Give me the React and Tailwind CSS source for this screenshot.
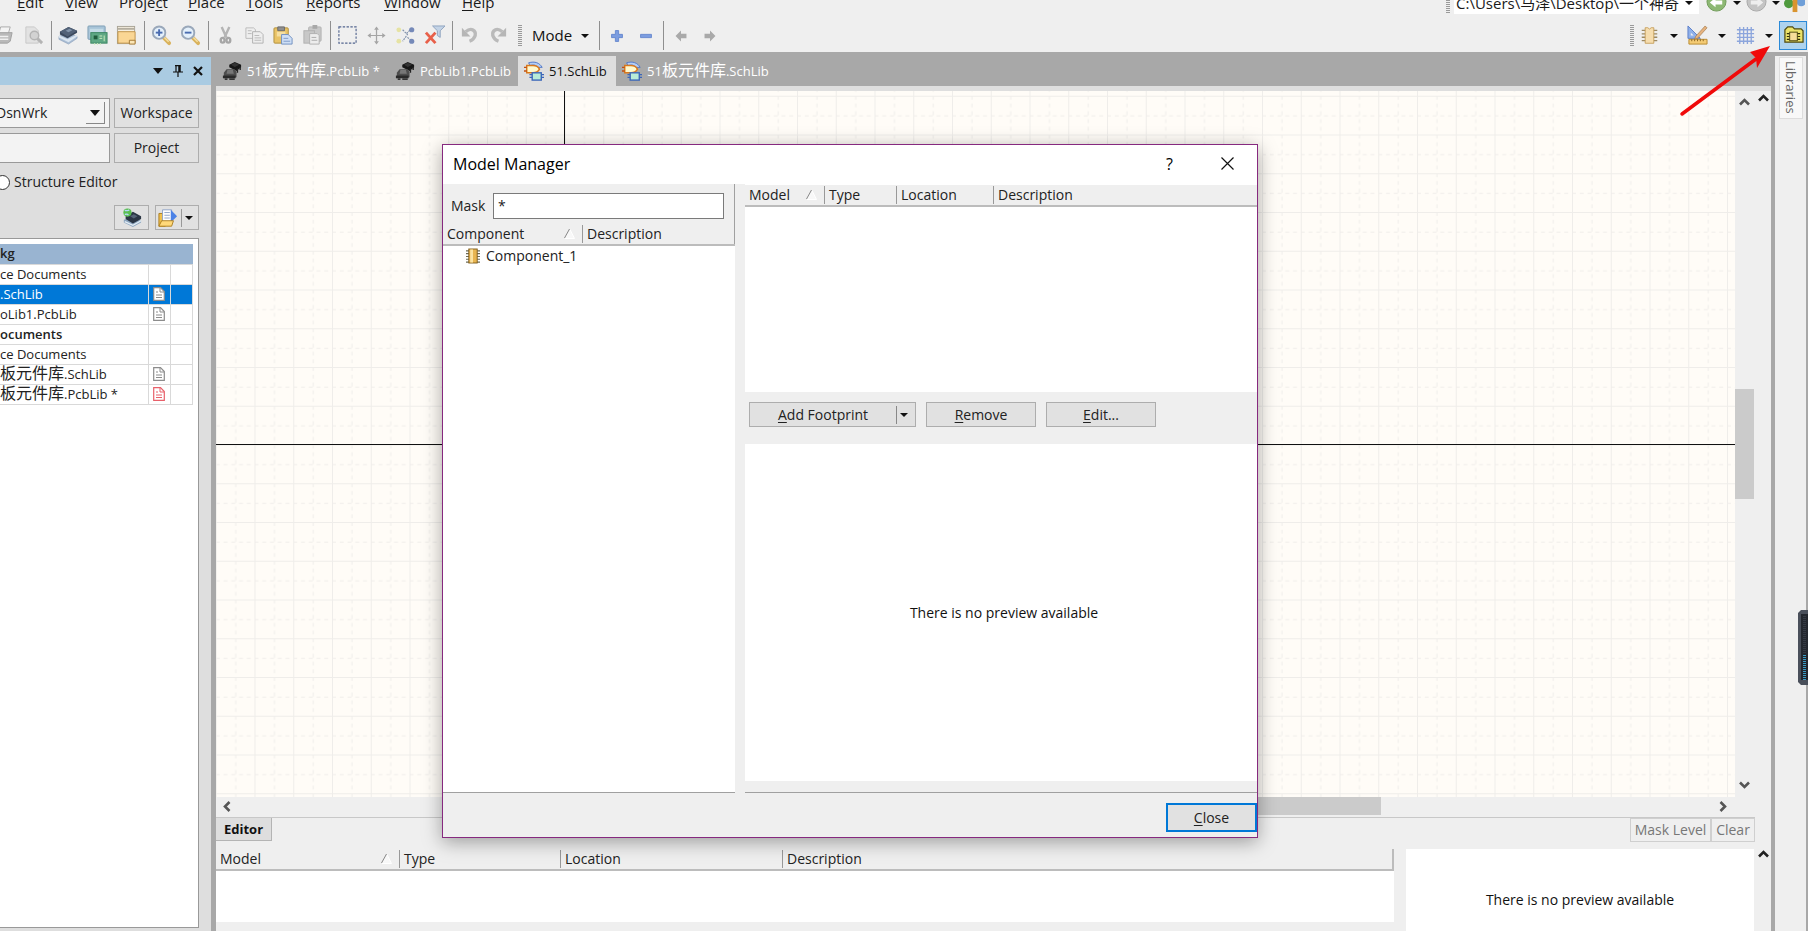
import React from "react";

/* "&" marks the mnemonic letter of a label */
const Mnemonic = ({ label }) => {
  const at = label.indexOf("&");
  if (at < 0) return label;
  return (
    <>
      {label.slice(0, at)}
      <span className="underline underline-offset-2">{label[at + 1]}</span>
      {label.slice(at + 2)}
    </>
  );
};

/* File names set their Chinese part larger than the Latin part */
const FileName = ({ name }) => (
  <span className="whitespace-pre">
    {name.split(/([\u4e00-\u9fff]+)/).map((part, i) =>
      i % 2 ? <span key={i} className="text-base leading-none">{part}</span> : part
    )}
  </span>
);

const Caret = () => (
  <svg width="8" height="4" viewBox="0 0 8 4" className="shrink-0">
    <path d="M0 0h8L4 4z" fill="#111" />
  </svg>
);

const Chevron = ({ turn = "", stroke = "#555" }) => (
  <svg width="11" height="9" viewBox="0 0 11 9" className={turn}>
    <path d="M1 7.500L5.500 3L10 7.500" fill="none" stroke={stroke} strokeWidth="2.600" />
  </svg>
);

const Svg = ({ children, size = 21 }) => (
  <svg width={size} height={size} viewBox="0 0 22 22" fill="none" className="shrink-0">
    {children}
  </svg>
);

const PrintIcon = () => (
  <Svg>
    <path d="M7 2h10l-2 7H5z" fill="#f4f4f4" stroke="#aaa" />
    <path d="M2 10l4-2h13l-2 9-3 2H2z" fill="#b9b9b9" stroke="#a2a2a2" />
    <path d="M3 12h12M3 15h12" stroke="#efefef" strokeWidth="1.500" />
  </Svg>
);

const PreviewIcon = () => (
  <Svg>
    <path d="M3 2h9l4 4v13H3z" fill="#e2e2e2" stroke="#c8c8c8" />
    <circle cx="12" cy="11" r="4.500" fill="#d2d2d2" stroke="#b4b4b4" strokeWidth="1.500" />
    <path d="M15 14l5 5" stroke="#b4b4b4" strokeWidth="3" />
  </Svg>
);

const StackIcon = () => (
  <Svg>
    <path d="M1 12l9-4 10 4v2l-9 6-10-5z" fill="#a9bdd4" stroke="#8299b5" strokeWidth=".6" />
    <path d="M1 11l9 4 10-5v2l-9 6-10-5z" fill="#dbe6f1" />
    <path d="M2 7l9-5 9 4v2l-10 6-8-4z" fill="#3c4a5e" />
    <path d="M2 7l9-5 9 4-10 6z" fill="#526278" />
    <path d="M8 6l4-2 3 1.500-4 2z" fill="#8294aa" />
  </Svg>
);

const PcbIcon = () => (
  <Svg>
    <rect x="1" y="1" width="18" height="14" rx="1" fill="#a8c4d8" stroke="#7d9db5" />
    <rect x="3" y="4" width="14" height="9" fill="#c4dbe6" />
    <rect x="4" y="8" width="17" height="11" fill="#5fa884" stroke="#3a8560" />
    <rect x="7" y="11" width="4" height="4" fill="#205c3c" />
    <path d="M13 11.500h3M13 14h3M18 11v6M8 19v2M11 19v2M14 19v2" stroke="#d0ecbe" />
  </Svg>
);

const FolderWindowIcon = () => (
  <Svg>
    <rect x="1.500" y="1.500" width="18" height="18" fill="#f6efe0" stroke="#a9a396" />
    <path d="M2 4h17" stroke="#b4aea0" strokeWidth="2" />
    <path d="M2 7h18v12H2z" fill="#fad694" stroke="#c0954c" />
    <path d="M14 16h6v4h-6z" fill="#fbe6b6" stroke="#a57a36" />
  </Svg>
);

const ZoomIcon = ({ plus }) => (
  <Svg>
    <path d="M13 13l6 6" stroke="#d9b25c" strokeWidth="4" strokeLinecap="round" />
    <path d="M13 12l5.500 5.500" stroke="#f6dfa0" strokeWidth="1.500" />
    <circle cx="8.500" cy="8" r="6.500" fill="#e4f0fb" stroke="#9aa8ba" strokeWidth="2" />
    <path d="M5 8h7" stroke="#4a6cb0" strokeWidth="2" />
    {plus && <path d="M8.500 4.500v7" stroke="#4a6cb0" strokeWidth="2" />}
  </Svg>
);

const CutIcon = () => (
  <Svg>
    <path d="M7 2l5 11M15 2l-5 11" stroke="#b4b4b4" strokeWidth="2.500" />
    <ellipse cx="8" cy="16" rx="2" ry="2.500" stroke="#a6a6a6" strokeWidth="2.500" />
    <ellipse cx="14" cy="16" rx="2" ry="2.500" stroke="#a6a6a6" strokeWidth="2.500" />
  </Svg>
);

const CopyIcon = () => (
  <Svg>
    <path d="M2 3h8l2 2v9H2z" fill="#eee" stroke="#bbb" />
    <path d="M9 7h8l3 3v9H9z" fill="#eee" stroke="#b2b2b2" />
    <path d="M4 6h4M4 9h4M11 11h5M11 13.500h7M11 16h7" stroke="#b9b9b9" />
  </Svg>
);

const PasteIcon = () => (
  <Svg>
    <rect x="1" y="3" width="15" height="16" rx="1" fill="#e9c366" stroke="#b0903f" />
    <path d="M5 2h7v4H5z" fill="#8f8f8f" stroke="#6a6a6a" />
    <path d="M4 7h9v5H4z" fill="#f6dfa0" />
    <path d="M9 10h7l4 4v6H9z" fill="#cfdff5" stroke="#6f8fc0" />
    <path d="M11 14h5M11 17h7" stroke="#7e9bca" />
  </Svg>
);

const PasteArrayIcon = () => (
  <Svg>
    <rect x="7" y="2" width="13" height="15" rx="1" fill="#c8c8c8" stroke="#b2b2b2" />
    <path d="M11 0h5v4h-5z" fill="#a8a8a8" />
    <rect x="2" y="6" width="11" height="13" fill="#c8c8c8" stroke="#b0b0b0" />
    <path d="M8 9h8l2 2v9H8z" fill="#ededed" stroke="#b0b0b0" />
    <path d="M10 13h5M10 16h6" stroke="#aaa" />
  </Svg>
);

const MarqueeIcon = () => (
  <Svg>
    <rect x="2" y="2" width="18" height="17" stroke="#53658f" strokeWidth="1.200" strokeDasharray="2.500 1.500" />
  </Svg>
);

const MoveIcon = () => (
  <Svg>
    <path d="M11 3v16M3 11h16" stroke="#a5a5a5" strokeWidth="1.300" />
    <path d="M8.500 5L11 1.500 13.500 5zM8.500 17l2.500 3.500L13.500 17zM5 8.500L1.500 11 5 13.500zM17 8.500l3.500 2.500-3.500 2.500z" fill="#a5a5a5" />
  </Svg>
);

const CrossSelectIcon = () => (
  <Svg>
    <circle cx="4" cy="5" r="2.500" fill="#e6e3a3" />
    <circle cx="4" cy="17" r="2.500" fill="#e6e3a3" />
    <path d="M8 5l5 5-5 7M12 9l4-4M13 13l4 3" stroke="#7f91ab" strokeWidth="1.200" strokeDasharray="2 1" />
    <circle cx="17.500" cy="5" r="2.700" fill="#7589b8" />
    <circle cx="17.500" cy="17" r="2.700" fill="#7589b8" />
  </Svg>
);

const ClearFilterIcon = () => (
  <Svg>
    <path d="M9 1h13l-5 5v7l-3-2V6z" fill="#c3d3e6" stroke="#8fa4bf" />
    <path d="M2 8l10 11M12 8L2 19" stroke="#e8604a" strokeWidth="3" />
  </Svg>
);

const UndoIcon = ({ flip }) => (
  <Svg>
    <g transform={flip ? "translate(22 0) scale(-1 1)" : undefined}>
      <path d="M7 7c6-5 11-1 10 4-1 3-3 5-6 6" stroke="#bababa" strokeWidth="3.500" />
      <path d="M3 3v9h9z" fill="#b6b6b6" />
    </g>
  </Svg>
);

const PlusIcon = () => (
  <Svg size={12}>
    <path d="M8 1h6v7h7v6h-7v7H8v-7H1V8h7z" fill="#7c9de0" stroke="#5f82cc" strokeWidth="1.500" />
  </Svg>
);

const MinusIcon = () => (
  <Svg size={12}>
    <path d="M1 8h20v6H1z" fill="#7c9de0" stroke="#5f82cc" strokeWidth="1.500" />
  </Svg>
);

const ArrowIcon = ({ flip }) => (
  <Svg size={12}>
    <g transform={flip ? "translate(22 0) scale(-1 1)" : undefined}>
      <path d="M1 11l10-10v6h10v8H11v6z" fill="#a9a9a9" />
    </g>
  </Svg>
);

const ChipIcon = () => (
  <Svg size={19}>
    <path d="M2 5h18M2 9h18M2 13h18M2 17h18" stroke="#9c8a65" strokeWidth="1.500" />
    <path d="M6 2h3l2 1.500L13 2h3v18H6z" fill="#f6ddae" stroke="#c49b55" />
  </Svg>
);

const DrawToolsIcon = () => (
  <Svg>
    <path d="M1 1v13h13z" fill="#8fb0ea" stroke="#5d80c8" />
    <path d="M4 8v3h3z" fill="#f0f0f0" />
    <path d="M19 1l2 2-10 11-3 1 1-3z" fill="#e6b27e" stroke="#a07848" strokeWidth=".7" />
    <path d="M2 15h19v5H2z" fill="#f4cb74" stroke="#b98a30" />
    <path d="M5 15v2M8 15v2M11 15v2M14 15v2M17 15v2" stroke="#8a6420" />
  </Svg>
);

const GridIcon = () => (
  <Svg>
    <path d="M5 2v18M9 2v18M13 2v18M17 2v18M2 5h18M2 9h18M2 13h18M2 17h18" stroke="#8ca5dc" strokeWidth="1.400" />
  </Svg>
);

const LibraryIcon = () => (
  <Svg>
    <path d="M2 5l3-3h5l2 2h7l2 2v12H2z" fill="#ece36a" stroke="#4e4a12" strokeWidth="1.300" />
    <path d="M4 9h14M4 12h14M4 15h14" stroke="#33300a" strokeWidth="1.200" />
    <rect x="7" y="7.500" width="8" height="9" fill="#f7dd9a" stroke="#4e4a12" />
  </Svg>
);

const PcbLibIcon = () => (
  <Svg size={20}>
    <path d="M8 4l6-3 7 3v3l-5 4-8-4z" fill="#161616" />
    <path d="M10 4l4-2 5 2-5 2.500z" fill="#333" />
    <path d="M20 6v4M17 8v5" stroke="#222" strokeWidth="1.500" />
    <path d="M5 9h9l2 3v6H2v-5z" fill="#4d4d4d" />
    <path d="M6 10h6l1 4H5z" fill="#777" />
    <path d="M1 16h14v3H1z" fill="#2a2a2a" />
    <path d="M3 20h3M8 20h6" stroke="#111" strokeWidth="1.500" />
  </Svg>
);

const SchLibIcon = () => (
  <Svg size={20}>
    <path d="M5 2c7-2 12 0 15 5h-5c-2-3-5-3-8-2z" fill="#b4cdf5" stroke="#4c74c4" />
    <path d="M3 5h7c4 0 6 2 7 4-1 2-3 4-7 4H3z" fill="#fff8cc" stroke="#d8791e" strokeWidth="1.600" />
    <path d="M0 7h3M0 11h3" stroke="#c25010" strokeWidth="1.600" />
    <rect x="9" y="13" width="10" height="8" fill="#b8ecd8" stroke="#3b66b8" strokeWidth="1.500" />
    <path d="M6 15h3M6 18h3M19 15h3M19 18h3" stroke="#3b66b8" strokeWidth="1.500" />
  </Svg>
);

const GlobeStackIcon = () => (
  <Svg size={20}>
    <path d="M2 13l9-3 10 4v2l-9 5-10-5z" fill="#8ea6bf" />
    <path d="M3 15l9 4 9-5" stroke="#e3edf5" strokeWidth="1.500" />
    <path d="M4 9l8-5 9 5v3l-9 5-8-5z" fill="#2b3644" />
    <path d="M9 9l4-2 4 2-4 2.500z" fill="#566577" />
    <circle cx="6" cy="5" r="4.500" fill="#5abf50" />
    <path d="M3 3c2-1 3 1 5-1M3 7c2 0 3-1 4 1" stroke="#b4d8f6" strokeWidth="1.500" />
  </Svg>
);

const OpenFolderIcon = () => (
  <Svg size={20}>
    <path d="M1 6h5l2 2v12H1z" fill="#f0c04c" stroke="#a97a1c" />
    <path d="M5 2h10v13H5z" fill="#fff" stroke="#8ba0c4" />
    <path d="M7 5h6M7 8h6M7 11h6" stroke="#8ba0c4" />
    <path d="M14 2l7 7-7 7z" fill="#4c82e6" />
    <path d="M1 20l3-6h13l-2 6z" fill="#ffd97a" stroke="#a97a1c" />
  </Svg>
);

const DocIcon = ({ color = "#8c8c8c" }) => (
  <svg width="12" height="14" viewBox="0 0 12 14" fill="none">
    <path d="M.7.700h6.800l3.800 3.800v8.800H.7z" fill="#fff" stroke={color} strokeWidth="1.200" />
    <path d="M7 1v4h4M3 5h2M3 8h6M3 10.500h6" stroke={color} />
  </svg>
);

const ComponentIcon = () => (
  <svg width="14" height="16" viewBox="0 0 15 16" fill="none">
    <path d="M0 2.500h15M0 5.500h15M0 8.500h15M0 11.500h15M0 14.500h15" stroke="#6c6c58" strokeWidth="1.200" />
    <rect x="3" y=".5" width="9" height="15" fill="#e8b550" stroke="#7d5c1c" />
    <path d="M6 1v14" stroke="#fbe3a2" strokeWidth="3" />
  </svg>
);

const SortMark = () => (
  <svg width="11" height="10" viewBox="0 0 11 10" fill="none" className="mr-[7px]">
    <path d="M1 9.500h9.500L6 .5" fill="#f8f8f8" stroke="#fff" />
    <path d="M.5 9L5.500 0" stroke="#888" />
  </svg>
);

const Separator = () => (
  <div className="flex h-[29px] w-[6px] justify-center">
    <div className="w-px bg-[#8f8f8f]" />
  </div>
);

const Grip = () => (
  <svg width="4" height="22" viewBox="0 0 4 22" className="shrink-0">
    <path d="M2 0v22" stroke="#9a9a9a" strokeWidth="4" strokeDasharray="1 1" />
  </svg>
);

const ToolButton = ({ name, children }) => (
  <button aria-label={name} className="flex h-[29px] w-[29px] shrink-0 items-center justify-center">
    {children}
  </button>
);

const menus = [
  { label: "&Edit", width: "w-12" },
  { label: "&View", width: "w-[54px]" },
  { label: "Proje&ct", width: "w-[69px]" },
  { label: "&Place", width: "w-[58px]" },
  { label: "&Tools", width: "w-[60px]" },
  { label: "&Reports", width: "w-[78px]" },
  { label: "&Window", width: "w-[78px]" },
  { label: "&Help", width: "w-14" },
];

const MenuBar = () => (
  <div className="flex h-[19px] justify-between overflow-hidden text-[15px] text-[#1a1a1a]">
    <nav className="-mt-[9px] flex h-[22px] pl-[17px]">
      {menus.map((menu) => (
        <button key={menu.label} className={`${menu.width} text-left leading-[22px]`}>
          <Mnemonic label={menu.label} />
        </button>
      ))}
    </nav>
    <div className="-mt-[9px] flex h-[23px] items-center">
      <Grip />
      <div className="ml-1 flex h-[23px] w-[245px] items-center bg-white">
        <select aria-label="Address" className="w-[231px] appearance-none pl-[2px] leading-[22px]">
          <option>C:\Users\马泽\Desktop\一个神奇</option>
        </select>
        <Caret />
      </div>
      <button aria-label="Back" className="flex w-[34px] justify-center">
        <Svg>
          <circle cx="11" cy="10" r="10" fill="#8db873" stroke="#6f9a58" />
          <path d="M4 11l6-5v3h7v4h-7v3z" fill="#fff" />
        </Svg>
      </button>
      <Caret />
      <button aria-label="Forward" className="flex w-[31px] justify-center">
        <Svg>
          <circle cx="11" cy="10" r="10" fill="#c4c4c4" stroke="#a8a8a8" />
          <path d="M18 11l-6-5v3H5v4h7v3z" fill="#eee" />
        </Svg>
      </button>
      <Caret />
      <button aria-label="Home" className="flex w-[28px] justify-center">
        <Svg>
          <circle cx="5" cy="12" r="5" fill="#4f9a3e" />
          <circle cx="18" cy="10" r="5" fill="#6f9fd8" />
          <path d="M9 8h5v13H9z" fill="#d9942f" />
        </Svg>
      </button>
    </div>
  </div>
);

const ToolBar = () => (
  <div className="flex h-[33px] items-center justify-between">
    <div className="-ml-[10px] flex items-center">
      <ToolButton name="Print"><PrintIcon /></ToolButton>
      <ToolButton name="Print preview"><PreviewIcon /></ToolButton>
      <Separator />
      <ToolButton name="Devices"><StackIcon /></ToolButton>
      <ToolButton name="Board"><PcbIcon /></ToolButton>
      <ToolButton name="Documents"><FolderWindowIcon /></ToolButton>
      <Separator />
      <ToolButton name="Zoom in"><ZoomIcon plus /></ToolButton>
      <ToolButton name="Zoom out"><ZoomIcon /></ToolButton>
      <Separator />
      <ToolButton name="Cut"><CutIcon /></ToolButton>
      <ToolButton name="Copy"><CopyIcon /></ToolButton>
      <ToolButton name="Paste"><PasteIcon /></ToolButton>
      <ToolButton name="Paste array"><PasteArrayIcon /></ToolButton>
      <Separator />
      <ToolButton name="Select inside area"><MarqueeIcon /></ToolButton>
      <ToolButton name="Move"><MoveIcon /></ToolButton>
      <ToolButton name="Cross select"><CrossSelectIcon /></ToolButton>
      <ToolButton name="Clear filter"><ClearFilterIcon /></ToolButton>
      <Separator />
      <ToolButton name="Undo"><UndoIcon /></ToolButton>
      <ToolButton name="Redo"><UndoIcon flip /></ToolButton>
      <div className="pl-[5px]">
        <Grip />
      </div>
      <button className="flex h-[29px] w-[74px] items-center gap-[9px] pl-[10px] text-[15px] text-[#111]">
        Mode <Caret />
      </button>
      <Separator />
      <ToolButton name="Add"><PlusIcon /></ToolButton>
      <ToolButton name="Subtract"><MinusIcon /></ToolButton>
      <Separator />
      <ToolButton name="Previous part"><ArrowIcon /></ToolButton>
      <ToolButton name="Next part"><ArrowIcon flip /></ToolButton>
    </div>
    <div className="flex items-center">
      <Grip />
      <div className="flex items-center pl-px">
        <ToolButton name="Place part"><ChipIcon /></ToolButton>
        <button aria-label="Place part options" className="flex w-[19px] justify-center"><Caret /></button>
        <ToolButton name="Drawing tools"><DrawToolsIcon /></ToolButton>
        <button aria-label="Drawing options" className="flex w-[19px] justify-center"><Caret /></button>
        <ToolButton name="Grids"><GridIcon /></ToolButton>
        <button aria-label="Grid options" className="flex w-[19px] pl-[5px]"><Caret /></button>
      </div>
      <button
        aria-label="Model Manager"
        className="mr-px flex h-[29px] w-[28px] items-center justify-center border border-[#2a8ad8] bg-[#aed3ee]"
      >
        <LibraryIcon />
      </button>
    </div>
  </div>
);

const projectRows = [
  { name: "kg", kind: "project" },
  { name: "ce Documents" },
  { name: ".SchLib", kind: "selected", doc: "#8c8c8c" },
  { name: "oLib1.PcbLib", doc: "#8c8c8c" },
  { name: "ocuments", kind: "group" },
  { name: "ce Documents" },
  { name: "板元件库.SchLib", doc: "#8c8c8c" },
  { name: "板元件库.PcbLib *", doc: "#e8606a" },
];

const rowStyles = {
  project: "bg-[#99b4d1] font-semibold",
  selected: "bg-[#0078d7] text-white",
  group: "font-semibold",
};

const ProjectsPanel = () => (
  <aside className="mt-[5px] flex w-[211px] shrink-0 flex-col bg-[#dedede]">
    <div className="flex h-7 items-center justify-end gap-[10px] bg-[#aacbe2] pr-2">
      <button aria-label="Panel menu">
        <svg width="10" height="6" viewBox="0 0 10 6">
          <path d="M0 0h10L5 6z" fill="#111" />
        </svg>
      </button>
      <button aria-label="Pin panel">
        <svg width="10" height="12" viewBox="0 0 10 12" fill="none" stroke="#111">
          <path d="M2 .7h6M3 1v6M0 7h10M5 7v5" strokeWidth="1.200" />
          <path d="M6.500 1v6" strokeWidth="2.500" />
        </svg>
      </button>
      <button aria-label="Close panel">
        <svg width="10" height="10" viewBox="0 0 10 10">
          <path d="M1 1l8 8M9 1L1 9" stroke="#111" strokeWidth="2.200" />
        </svg>
      </button>
    </div>

    <div className="grid grid-cols-[110px_85px] gap-x-1 gap-y-[5px] pt-[13px]">
      <div className="flex h-[30px] items-center border border-l-0 border-[#999] bg-[#f3f3f3] pr-1">
        <select aria-label="Workspace" className="-ml-1 min-w-0 flex-1 appearance-none">
          <option>DsnWrk</option>
        </select>
        <span className="flex h-[22px] w-[19px] items-center justify-center border-r border-b border-[#888] bg-[#f3f3f3]">
          <svg width="10" height="6" viewBox="0 0 10 6">
            <path d="M0 0h10L5 6z" fill="#111" />
          </svg>
        </span>
      </div>
      <button className="border border-[#adadad] bg-[#e1e1e1]">Workspace</button>
      <input aria-label="Project" className="h-[30px] border border-l-0 border-[#999] bg-[#f3f3f3]" />
      <button className="border border-[#adadad] bg-[#e1e1e1]">Project</button>
    </div>

    <label className="mt-[10px] flex h-[18px] items-center gap-1">
      <input
        type="radio"
        name="editor"
        className="-ml-[5px] h-[15px] w-[15px] appearance-none rounded-full border border-[#333] bg-white"
      />
      Structure Editor
    </label>

    <div className="mt-[14px] flex justify-end gap-[6px] pr-3">
      <button aria-label="Workspace view" className="flex h-[25px] w-[35px] items-center justify-center border border-[#adadad] bg-[#e1e1e1]">
        <GlobeStackIcon />
      </button>
      <button aria-label="Open document" className="flex h-[25px] w-[44px] items-center gap-[3px] border border-[#adadad] bg-[#e1e1e1] pl-[2px]">
        <OpenFolderIcon />
        <span className="h-[18px] w-px bg-[#999]" />
        <Caret />
      </button>
    </div>

    <div className="mt-2 mr-3 mb-[3px] flex-1 border border-l-0 border-[#999] bg-white pt-[5px] pr-[5px] text-[13px]">
      <table className="w-full table-fixed border-collapse">
        <colgroup>
          <col />
          <col className="w-[22px]" />
          <col className="w-[22px]" />
        </colgroup>
        <tbody>
          {projectRows.map((row, i) => (
            <tr key={i} className={`h-5 border-b border-[#d9d9d9] ${rowStyles[row.kind] ?? ""}`}>
              <td className="p-0 leading-[19px] whitespace-nowrap" colSpan={row.kind === "project" ? 3 : 1}>
                <FileName name={row.name} />
              </td>
              {row.kind !== "project" && (
                <>
                  <td className="border-l border-[#d9d9d9] p-0">
                    <div className="flex justify-center">{row.doc && <DocIcon color={row.doc} />}</div>
                  </td>
                  <td className="border-x border-[#d9d9d9] p-0" />
                </>
              )}
            </tr>
          ))}
        </tbody>
      </table>
    </div>
  </aside>
);

const tabs = [
  { name: "51板元件库.PcbLib *", icon: <PcbLibIcon />, width: "w-[173px]" },
  { name: "PcbLib1.PcbLib", icon: <PcbLibIcon />, width: "w-[129px]" },
  { name: "51.SchLib", icon: <SchLibIcon />, width: "w-[98px]", active: true },
  { name: "51板元件库.SchLib", icon: <SchLibIcon />, width: "w-[164px]" },
];

const DocumentTabs = () => (
  <div className="flex h-[34px] pt-1 text-[13px]" role="tablist">
    {tabs.map((tab) => (
      <button
        key={tab.name}
        role="tab"
        aria-selected={!!tab.active}
        className={`flex items-center gap-[5px] pl-[6px] whitespace-nowrap ${tab.width} ${
          tab.active ? "bg-[#dedede] text-[#111]" : "text-white"
        }`}
      >
        {tab.icon}
        <FileName name={tab.name} />
      </button>
    ))}
  </div>
);

/* Sheet with the origin axes; dashed lines fall midway between solid ones */
const Sheet = () => (
  <svg width="100%" height="100%" className="block bg-[#fffcf7]">
    <defs>
      <pattern id="grid" x="348.500" y="353.500" width="38.750" height="38.750" patternUnits="userSpaceOnUse">
        <path d="M.5 0v38.750M0 .5h38.750" stroke="#efedea" fill="none" />
        <path d="M20 0v38.750M0 20h38.750" stroke="#f0edea" strokeDasharray="4 3.750" fill="none" />
      </pattern>
    </defs>
    <rect width="100%" height="100%" fill="url(#grid)" />
    <path d="M348.500 0v353" stroke="#111" />
    <line x1="0" y1="353.500" x2="100%" y2="353.500" stroke="#111" />
  </svg>
);

const ModelTable = ({ columns, className = "" }) => (
  <table className={`w-full table-fixed border-collapse bg-[#efefef] ${className}`}>
    <colgroup>
      {columns.map((col) => (
        <col key={col.name} className={col.width} />
      ))}
    </colgroup>
    <thead>
      <tr className="h-[21px] border-b-2 border-[#bcbcbc]">
        {columns.map((col, i) => (
          <th key={col.name} className="p-0 text-left font-normal">
            <div className={`flex h-[18px] items-center justify-between pl-1 ${i > 0 ? "border-l border-[#999]" : ""}`}>
              {col.name}
              {i === 0 && <SortMark />}
            </div>
          </th>
        ))}
      </tr>
    </thead>
  </table>
);

const editorColumns = [
  { name: "Model", width: "w-[183px]" },
  { name: "Type", width: "w-[161px]" },
  { name: "Location", width: "w-[222px]" },
  { name: "Description", width: "" },
];

const dialogColumns = [
  { name: "Model", width: "w-[79px]" },
  { name: "Type", width: "w-[72px]" },
  { name: "Location", width: "w-[97px]" },
  { name: "Description", width: "" },
];

const componentColumns = [
  { name: "Component", width: "w-[139px]" },
  { name: "Description", width: "" },
];

const Workspace = () => (
  <main className="ml-[5px] flex min-w-0 flex-1 flex-col">
    <DocumentTabs />
    <div className="h-[5px] bg-[#dedede]" />

    <div className="flex min-h-0 flex-1 bg-[#efefef]">
      <div className="flex min-w-0 flex-1 flex-col">
        <div className="min-h-0 flex-1">
          <Sheet />
        </div>
        <div className="flex h-5 items-center gap-3 pr-[6px] pb-[2px] pl-[5px]">
          <Chevron turn="-rotate-90" />
          <div className="flex h-full flex-1 justify-end">
            <div className="mr-[325px] w-[420px] bg-[#cbcbcb]" />
          </div>
          <Chevron turn="rotate-90" />
        </div>
      </div>
      <div className="flex w-[19px] flex-col items-center py-[6px]">
        <Chevron />
        <div className="mt-[283px] h-[110px] w-full bg-[#cbcbcb]" />
        <div className="mt-auto mb-[21px]">
          <Chevron turn="rotate-180" />
        </div>
      </div>
      <div className="w-[17px] pt-[2px] pl-[4px]">
        <Chevron stroke="#222" />
      </div>
    </div>

    <div className="bg-[#efefef]">
      <div className="mr-4 flex h-[24px] items-start justify-between border-t border-[#c8c8c8]">
        <button className="h-[23px] border-r border-b border-[#b4b4b4] bg-[#dedede] px-2 text-[13px] leading-5 font-bold text-[#111]">Editor</button>
        <div className="flex leading-5">
          <button className="h-6 w-[81px] border border-[#cfcfcf] text-[#777]" disabled>Mask Level</button>
          <button className="h-6 w-[44px] border border-[#cfcfcf] text-[#777]" disabled>Clear</button>
        </div>
      </div>
      <div className="mt-2 flex h-[82px]">
        <div className="mb-[9px] flex-1 bg-white">
          <ModelTable columns={editorColumns} className="border-r-2 border-[#bcbcbc]" />
        </div>
        <div className="ml-3 flex w-[348px] justify-center bg-white pt-[42px]">
          <p className="leading-[18px] text-[#111]">There is no preview available</p>
        </div>
        <div className="w-[17px] pl-[4px]">
          <Chevron stroke="#222" />
        </div>
      </div>
    </div>
  </main>
);

const SideTabs = () => (
  <aside className="mt-1 ml-1 w-[33px] shrink-0 border-r-2 border-[#a8a8a8] bg-[#efefef]">
    <button className="mt-px ml-1 flex h-[62px] w-6 items-center justify-start border border-[#ddd] bg-[#f8f8f8] pt-[3px] text-[13px] leading-6 text-[#666] [writing-mode:vertical-rl]">
      Libraries
    </button>
  </aside>
);

const buttonStyle = "flex h-[25px] items-center justify-center border border-[#adadad] bg-[#e1e1e1]";

const ModelManager = () => (
  <div
    role="dialog"
    aria-label="Model Manager"
    className="absolute top-[144px] left-[442px] flex h-[694px] w-[816px] flex-col border border-[#86297f] bg-[#efefef] shadow-[0_4px_18px_rgba(0,0,0,0.35)]"
  >
    <div className="flex h-[39px] shrink-0 items-center bg-white pb-[2px] pl-[10px]">
      <h1 className="flex-1 text-base text-black">Model Manager</h1>
      <button aria-label="Help" className="w-[57px] text-base text-black">?</button>
      <button aria-label="Close window" className="flex w-[59px] justify-center">
        <svg width="13" height="13" viewBox="0 0 13 13">
          <path d="M.5.500l12 12M12.500.500l-12 12" stroke="#111" strokeWidth="1.200" />
        </svg>
      </button>
    </div>

    <div className="flex min-h-0 flex-1">
      <section className="flex w-[292px] flex-col border-b border-[#a0a0a0]">
        <div className="flex h-10 items-center border-r border-[#a0a0a0] pt-[3px] pr-[10px] pl-2">
          <label htmlFor="mask" className="w-[42px]">Mask</label>
          <input id="mask" defaultValue="*" className="h-[26px] min-w-0 flex-1 border border-[#7a7a7a] bg-white px-1" />
        </div>
        <ModelTable columns={componentColumns} className="border-r border-[#a0a0a0]" />
        <ul className="flex-1 bg-white pl-[23px]">
          <li className="flex h-5 items-center gap-[6px]">
            <ComponentIcon />
            Component_1
          </li>
        </ul>
      </section>

      <section className="ml-[10px] flex min-w-0 flex-1 flex-col border-b border-[#a0a0a0]">
        <div className="h-px bg-white" />
        <div className="h-[207px] bg-white">
          <ModelTable columns={dialogColumns} />
        </div>
        <div className="flex h-[52px] items-start gap-[10px] pt-[10px] pl-1">
          <div className={`${buttonStyle} w-[167px]`}>
            <button className="flex-1">
              <Mnemonic label="&Add Footprint" />
            </button>
            <span className="h-[18px] w-px bg-[#888]" />
            <button aria-label="More model types" className="flex h-full w-[18px] items-center pl-[3px]">
              <Caret />
            </button>
          </div>
          <button className={`${buttonStyle} w-[110px]`}><Mnemonic label="&Remove" /></button>
          <button className={`${buttonStyle} w-[110px]`}><Mnemonic label="&Edit..." /></button>
        </div>
        <div className="mb-[11px] flex flex-1 items-center justify-center bg-white pl-[6px]">
          <p className="text-[#111]">There is no preview available</p>
        </div>
      </section>
    </div>

    <div className="flex h-[44px] shrink-0 items-center justify-end pt-[5px]">
      <button className="h-[29px] w-[91px] border-2 border-[#0078d7] bg-[#e1e1e1]">
        <Mnemonic label="&Close" />
      </button>
    </div>
  </div>
);

/* Small level meter docked to the right edge */
const LevelMeter = () => (
  <svg width="10" height="75" viewBox="0 0 10 75" className="absolute top-[610px] right-0">
    <path d="M10 0H3L0 3v69l3 3h7z" fill="#4a505b" />
    <rect x="3" y="4" width="7" height="66" fill="#23272e" />
    <path d="M6.500 6v38" stroke="#343a44" strokeWidth="3" strokeDasharray="1 1" />
    <path d="M6.500 45v25" stroke="#3a9cc4" strokeWidth="3" strokeDasharray="1 1" />
  </svg>
);

const PointerArrow = () => (
  <svg width="92" height="72" viewBox="0 0 92 72" className="pointer-events-none absolute top-[45px] right-[37px]">
    <path d="M3 69L77 14" stroke="#f00a0a" strokeWidth="3.500" strokeLinecap="round" />
    <path d="M91 1L71 7l6 6 1 10z" fill="#f00a0a" />
  </svg>
);

const App = () => {
  return (
    <div className="relative flex h-screen flex-col overflow-hidden bg-[#efefef] font-['Open_Sans','Noto_Sans_CJK_SC',sans-serif] text-sm text-[#222]">
      <header className="shrink-0">
        <MenuBar />
        <ToolBar />
      </header>
      <div className="flex min-h-0 flex-1 bg-[#a8a8a8]">
        <ProjectsPanel />
        <Workspace />
        <SideTabs />
      </div>
      <ModelManager />
      <LevelMeter />
      <PointerArrow />
    </div>
  );
};

export default App;
